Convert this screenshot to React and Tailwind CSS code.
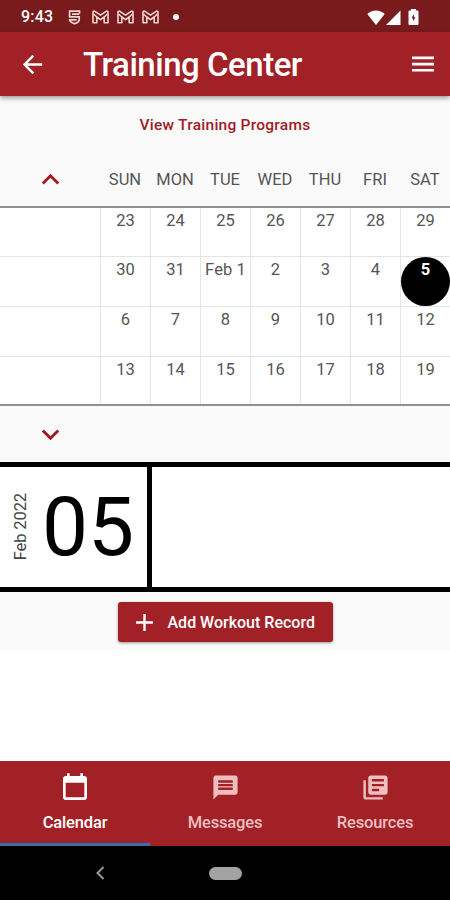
import React from "react";
import { MdArrowBack, MdExpandLess, MdExpandMore, MdAdd, MdMessage, MdLibraryBooks } from "react-icons/md";

const DAYS = ["SUN", "MON", "TUE", "WED", "THU", "FRI", "SAT"];
const WEEKS = [
  ["23", "24", "25", "26", "27", "28", "29"],
  ["30", "31", "Feb 1", "2", "3", "4", "5"],
  ["6", "7", "8", "9", "10", "11", "12"],
  ["13", "14", "15", "16", "17", "18", "19"],
];

function MailGlyph() {
  return (
    <svg width="17" height="14" viewBox="0 0 17 14" fill="none" stroke="#f3d6d3" strokeWidth="1.6" strokeLinejoin="round">
      <path d="M1 12.800V2.200Q1 1 2.500 1.200L8.500 5.200 14.500 1.200Q16 1 16 2.200V12.800H12.200V7L8.500 9.600 4.800 7V12.800Z" />
      <path d="M1.500 4 4.800 7M15.500 4 12.200 7" />
    </svg>
  );
}

function StatusBar() {
  return (
    <div className="flex h-8 items-center bg-[#791a1c] pl-[21px] pr-[31px] pt-[2px] text-white">
      <span className="w-[47px] text-[16px] font-medium leading-[30px] tracking-[0.2px]">9:43</span>
      <svg width="13" height="15" viewBox="0 0 13 15" fill="none" stroke="#f3d6d3" strokeWidth="1.7">
        <path d="M11.500 3.800V1.200H1.600V6.800H11.200V10.200Q10.800 12 6.400 13.800 2 12 1.600 9.800H8.600M4 4.200H11.200" />
      </svg>
      <div className="ml-[11px] flex gap-[8px]">
        <MailGlyph />
        <MailGlyph />
        <MailGlyph />
      </div>
      <span className="ml-[14px] size-[6px] rounded-full bg-white" />
      <svg className="ml-auto" width="18" height="15" viewBox="0 0 18 15" fill="#fff">
        <path d="M9 15 0.300 4Q4 .4 9 .4T17.700 4Z" />
      </svg>
      <svg className="ml-[1px]" width="15" height="15" viewBox="0 0 15 15" fill="#fff">
        <path d="M14.500 .5V15H0Z" />
      </svg>
      <svg className="ml-[7px]" width="11" height="16" viewBox="0 0 11 16">
        <path fill="#fff" d="M3 0H8V1.500H9.500Q10.500 1.500 10.500 2.500V15Q10.500 16 9.500 16H1.500Q.5 16 .5 15V2.500Q.5 1.500 1.500 1.500H3Z" />
        <path fill="#791a1c" d="M6 5 3.500 9.200H5V12.500L7.500 8.200H6Z" />
      </svg>
    </div>
  );
}

function Header() {
  return (
    <header className="relative flex h-16 items-center bg-[#a22126] pl-[18px] pr-[16px] text-white shadow-[0_2px_5px_rgba(0,0,0,0.4)]">
      <MdArrowBack size={29} />
      <h1 className="ml-[36px] whitespace-nowrap pt-px text-[33px] font-medium leading-[63px] tracking-[-0.48px]">Training Center</h1>
      <svg className="ml-auto" width="22" height="16" viewBox="0 0 22 16" fill="#fff">
        <path d="M0 .5H22V3.200H0ZM0 6.700H22V9.400H0ZM0 12.900H22V15.600H0Z" />
      </svg>
    </header>
  );
}

function Calendar() {
  return (
    <section className="text-[#555]">
      <div className="grid h-[54px] grid-cols-[100px_repeat(7,50px)] items-center text-center text-[16.5px]">
        <MdExpandLess size={35} className="justify-self-center text-[#a01820]" />
        {DAYS.map((d) => (
          <span key={d} className="pt-[2px]">{d}</span>
        ))}
      </div>
      <div className="h-[200px] border-y-2 border-[#909090] bg-white">
        {WEEKS.map((week, r) => (
          <div key={r} className="grid h-[50px] grid-cols-[100px_repeat(7,50px)] border-b border-[#e4e4e4] first:h-[49px] last:h-[47px] last:border-b-0">
            <span />
            {week.map((d) => (
              <div key={d} className="border-l border-[#e4e4e4] text-center text-[16.5px] leading-[26px] tracking-[0.1px]">
                {d === "5" ? <div className="h-[49px] rounded-full bg-black font-bold text-white">5</div> : <span className="whitespace-nowrap">{d}</span>}
              </div>
            ))}
          </div>
        ))}
      </div>
      <div className="flex h-[56px] w-[101px] items-center justify-center">
        <MdExpandMore size={35} className="text-[#a01820]" />
      </div>
    </section>
  );
}

function Tab({ label, active, children }) {
  return (
    <div className={`flex flex-1 flex-col items-center border-b-[3px] pt-[10px] text-[16.5px] font-medium tracking-[-0.15px] ${active ? "border-[#2f72ad] text-white" : "border-[#a22126] text-[#efbfc0]"}`}>
      <div className="flex h-[33px] items-center">{children}</div>
      <span className="mt-[6px] leading-[25px]">{label}</span>
    </div>
  );
}

export default function App() {
  return (
    <div className="flex h-[900px] w-[450px] flex-col overflow-hidden bg-white font-['Roboto',sans-serif]">
      <StatusBar />
      <Header />
      <main className="h-[554px] bg-[#fafafa]">
        <div className="h-[56px] pt-px text-center text-[15.5px] font-medium leading-[56px] tracking-[0.25px] text-[#a01c28]">View Training Programs</div>
        <Calendar />
        <section className="flex h-[130px] border-y-[5px] border-black bg-white">
          <div className="flex w-[152px] items-center border-r-[5px] border-black">
            <span className="ml-[10px] w-[22px] rotate-180 text-center text-[16.5px] leading-[22px] tracking-[-0.1px] text-[#444] [writing-mode:vertical-rl]">Feb 2022</span>
            <span className="ml-[10px] pt-px text-[82px] leading-[119px] text-black">05</span>
          </div>
        </section>
        <button className="mx-auto mt-[10px] flex h-[40px] w-[215px] items-center rounded-[3px] bg-[#a22126] pl-[12px] text-white shadow-[0_1px_3px_rgba(0,0,0,0.4)]">
          <MdAdd size={29} />
          <span className="ml-[9px] whitespace-nowrap pt-[2px] text-[16px] font-medium">Add Workout Record</span>
        </button>
      </main>
      <div className="flex-1" />
      <nav className="flex h-[85px] bg-[#a22126]">
        <Tab label="Calendar" active>
          <svg width="32" height="32" viewBox="0 0 24 24" fill="currentColor" className="mt-px">
            <path d="M19 3h-1V1h-2v2H8V1H6v2H5c-1.100 0-2 .9-2 2v14c0 1.100.9 2 2 2h14c1.100 0 2-.9 2-2V5c0-1.100-.9-2-2-2zm0 16H5V8h14v11z" />
          </svg>
        </Tab>
        <Tab label="Messages">
          <MdMessage size={29} />
        </Tab>
        <Tab label="Resources">
          <MdLibraryBooks size={29} />
        </Tab>
      </nav>
      <footer className="flex h-[54px] items-center bg-black">
        <svg className="ml-[95px]" width="10" height="14" viewBox="0 0 10 14" fill="none" stroke="#999" strokeWidth="2">
          <path d="M8.500 1 2.500 7 8.500 13" />
        </svg>
        <span className="ml-[104px] h-[13px] w-[33px] rounded-full bg-[#a3a3a3]" />
      </footer>
    </div>
  );
}
